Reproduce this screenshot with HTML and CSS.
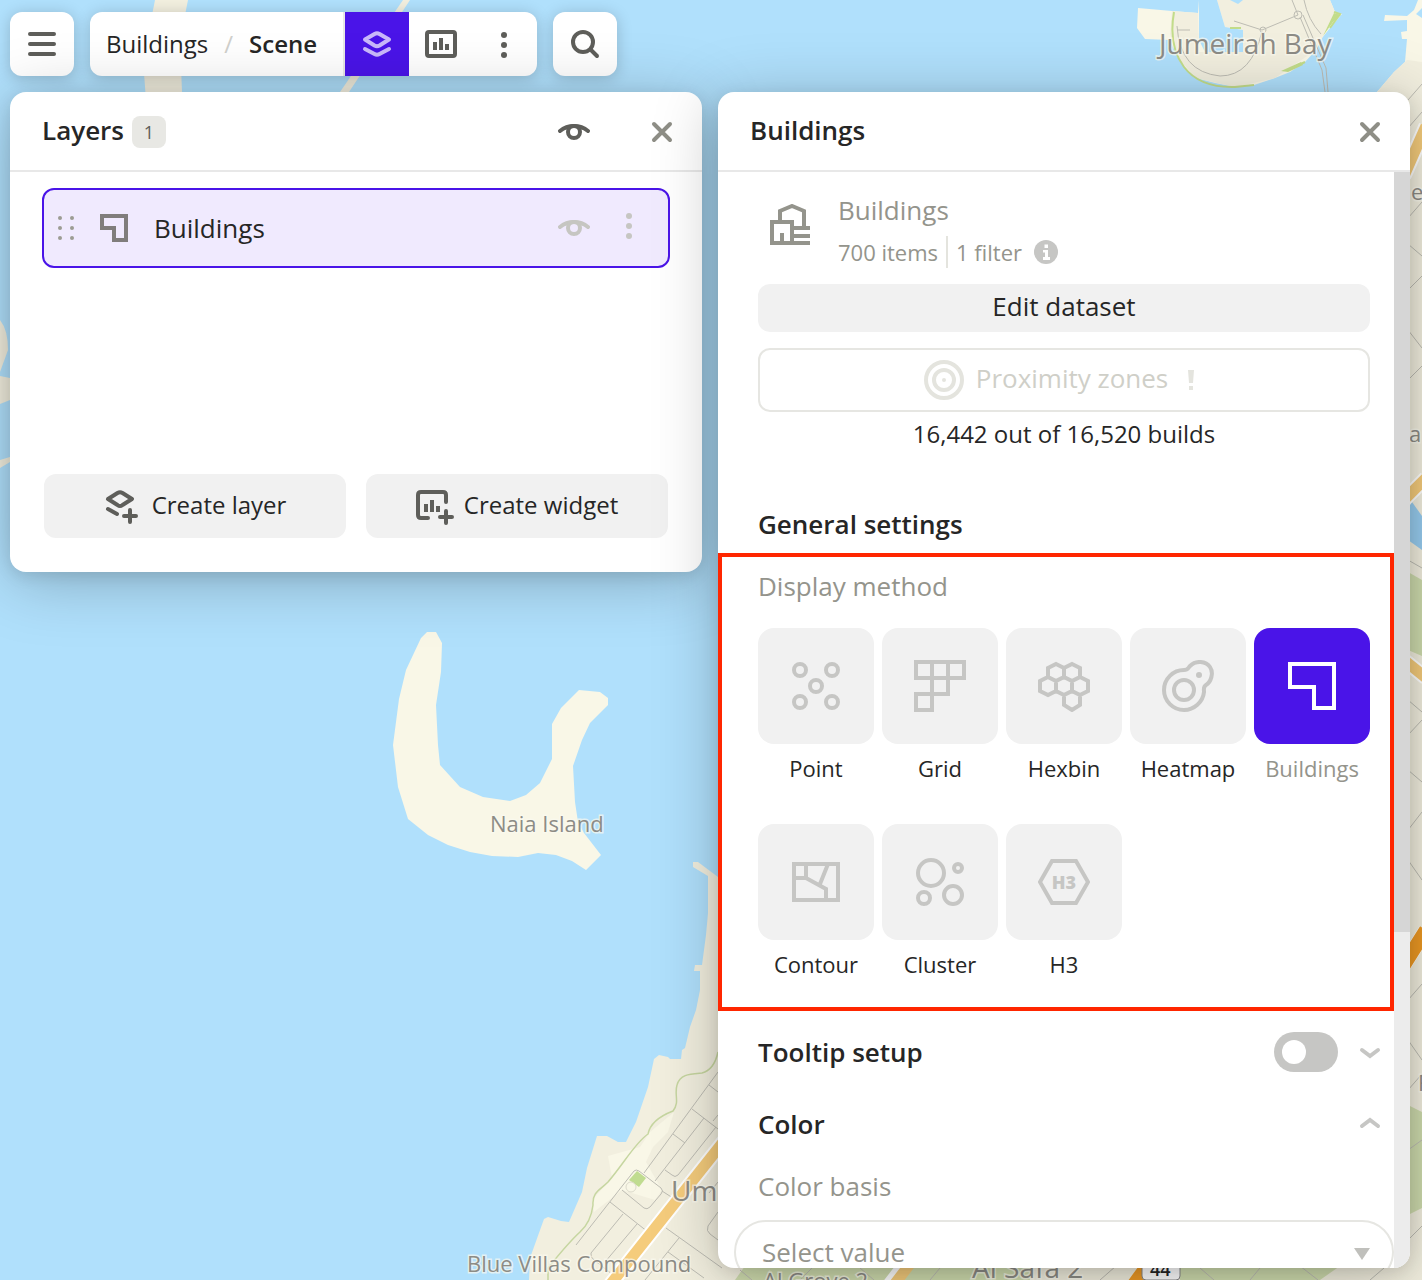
FILE: index.html
```html
<!DOCTYPE html>
<html lang="en">
<head>
<meta charset="utf-8">
<meta name="viewport" content="width=device-width, initial-scale=1">
<title>Buildings / Scene</title>
<link rel="stylesheet" href="styles.css">
</head>
<body>
<svg class="map" viewBox="0 0 1422 1280" preserveAspectRatio="xMinYMin slice" aria-label="Map">
  <rect width="1422" height="1280" fill="#b0e0fc"/>
  <!-- islands -->
  <g fill="#f9f7e7">
    <path d="M427 632L436 632L442 643L441 672L436 705L438 745L440 765L460 787L483 797L510 801L526 795L540 783L552 759V724L561 708L579 690L600 692L608 698V705L590 723L582 740L573 766L575 802L578 822L584 833L601 855L586 870L572 861L556 855L538 853L518 857L492 856L470 852L448 845L428 835L408 819L398 787L393 745L399 699L406 670L421 638Z"/>
    <path d="M1138 8L1172 11L1198 13L1199 0H1330L1335 12L1342 14L1330 28L1322 38L1316 50L1305 62L1290 72L1275 78L1254 85L1235 87L1215 83L1196 78L1185 68L1178 58L1172 45L1170 40L1145 39L1137 28Z"/>
    <path d="M1418 0L1414 10L1407 16L1385 15L1384 21L1407 20V31L1401 32L1402 39H1407L1405 62L1394 72L1370 100H1422V0Z"/>
  </g>
  <g fill="#f2efdf">
    <path d="M155 0H188L180 40L182 92L182 100H146L143 60Z"/>
    <path d="M403 0H410L349 92H340Z"/>
    <path d="M0 320Q8 330 8 350L0 372ZM0 376L10 378V400L0 404ZM0 460L10 457V462L0 468Z"/>
    <path d="M1172 11L1198 13L1199 52H1243V30L1225 27L1217 0H1330L1335 12L1316 50L1275 78L1235 87L1196 78L1178 58L1170 34Z"/>
    <path d="M1394 72L1407 60L1422 62V1280H529L530 1258L544 1219L548 1217L561 1221L569 1222L582 1192L587 1168L597 1136H607L618 1142H626L636 1122L648 1087L654 1059L659 1055L668 1057L670 1059H681L682 1050L685 1048L690 1027L696 1010L700 990V971H694L695 965H702L706 935L708 913V876L693 867V862H698L718 877L1378 91Z"/>
  </g>
  <path d="M1199 0H1217L1225 27L1243 30V52H1205L1199 40ZM1230 0H1243L1238 4ZM1416 14L1422 8V18Z" fill="#b0e0fc"/>
  <path d="M608 1156L640 1147L650 1132L674 1112L668 1132L653 1147L646 1162L662 1190L655 1200L622 1190L594 1212L592 1200L612 1178Z" fill="#f9f7e7"/>
  <!-- parks and canals -->
  <path d="M637 1171L646 1178L639 1187L629 1180Z" fill="#c0dc90"/>
  <circle cx="631" cy="1187" r="5" fill="none" stroke="#dcdacb"/>
  <path d="M1408 572L1422 580V656L1408 650ZM1408 1105L1422 1112V1208L1408 1215ZM745 1266H1030V1280H735ZM1180 1266H1340L1320 1280H1180Z" fill="#cfdcae"/>
  <path d="M1408 508L1412 502L1422 516V550L1408 540Z" fill="#98cdf0"/>
  <path d="M1174 12Q1168 46 1184 67T1235 87L1254 85M1288 70L1305 62M1330 28L1340 14L1334 12M1230 28H1241" fill="none" stroke="#c2dc8a" stroke-width="2"/>
  <path d="M1281 71L1301 62L1303 65L1288 72ZM1334 13L1341 15L1333 22L1323 36Z" fill="#c2dc8a"/>
  <path d="M718 1052Q714 1070 702 1073C690 1074 680 1074 677 1085C674 1095 680 1102 673 1111C660 1116 650 1124 648 1134C635 1143 625 1162 608 1182C600 1190 592 1192 593 1205Q591 1222 580 1232T548 1268V1280" fill="none" stroke="#c6d6a0" stroke-width="1.500"/>
  <!-- streets -->
  <g fill="none" stroke="#bdbcb3" stroke-width="1">
    <path d="M718 1072L644 1173M709 1085L718 1092M692 1109L718 1129M718 1115L713 1121M673 1134L685 1143M704 1118L655 1181M716 1127L678 1175Q675 1178 672 1175L665 1170M576 1245L634 1171Q636 1169 639 1171L661 1188Q664 1191 661 1194L650 1207Q647 1210 644 1208L622 1190M662 1191L676 1200M610 1202L648 1232M623 1214L591 1253Q590 1257 594 1260L612 1274M637 1224L605 1262M666 1228L722 1268M679 1238L645 1280M668 1252L704 1278M718 1212L708 1226Q706 1231 710 1234L718 1240M709 1193L718 1182"/>
    <path d="M1234 21L1262 30L1298 15L1292 0M1262 31Q1252 76 1220 76Q1180 72 1177 26M1177 30H1190M1300 17L1322 70L1325 92M1303 15L1326 68L1328 92M1304 0Q1308 20 1321 34"/>
    <circle cx="1298" cy="15" r="4"/><circle cx="1263" cy="30" r="3"/>
    <path d="M1408 128L1422 112M1408 100L1422 84M1408 218L1422 202M1408 244L1422 256M1408 290L1422 276M1408 330L1422 348M1408 380L1422 366M1408 560L1422 568M1408 700L1422 712M1408 735L1422 720M1408 770L1422 782M1408 830L1422 812M1408 860L1422 880M1408 1000L1422 984M1408 1040L1422 1060M1408 1090L1422 1074M1408 1150L1422 1140M1408 1240L1422 1226M740 1270L752 1280M800 1280L812 1268M860 1268L874 1280M930 1280L940 1268M1100 1280L1116 1266M1200 1268L1214 1280M1250 1280L1260 1268M1300 1266L1318 1280M1370 1280L1384 1268"/>
  </g>
  <g fill="none">
    <path d="M606 1290L728 1136M886 1290L906 1264M1404 176L1426 126M1404 500L1426 478M1404 660L1426 678M1404 965L1426 930" stroke="#fff" stroke-width="15"/>
    <path d="M606 1290L728 1136M890 1290L910 1264M1404 176L1426 126M1404 500L1426 478M1404 660L1426 678" stroke="#f5cc7c" stroke-width="11"/>
    <path d="M1404 965L1426 930M1130 1290L1146 1268" stroke="#ee9a24" stroke-width="14"/>
  </g>
  <!-- place names -->
  <g class="map-labels">
    <text x="1159" y="54" font-size="28">Jumeirah Bay</text>
    <text x="490" y="832" font-size="22">Naia Island</text>
    <text x="467" y="1272" font-size="22">Blue Villas Compound</text>
    <text x="671" y="1201" font-size="28">Um</text>
    <text x="763" y="1289" font-size="22">Al Grove 2</text>
    <text x="972" y="1278" font-size="28">Al Safa 2</text>
    <text x="1411" y="200" font-size="22">e</text>
    <text x="1409" y="442" font-size="22">a</text>
    <text x="1418" y="1091" font-size="22">F</text>
  </g>
  <rect x="1142" y="1256" width="38" height="24" rx="4" fill="#fff" stroke="#888"/>
  <text class="road-number" x="1150" y="1276" font-size="18">44</text>
</svg>

<div class="app">
  <nav class="toolbar">
    <button class="card icon-card" aria-label="Menu">
      <svg width="32" height="32" fill="none" stroke="#5e5e5a" stroke-width="4" stroke-linecap="round"><path d="M4 6H28M4 16H28M4 26H28"/></svg>
    </button>
    <div class="card scene-bar">
      <div class="crumbs">
        <a href="#">Buildings</a><span class="slash">/</span><a class="current" href="#">Scene</a>
      </div>
      <button class="tool tool-active" aria-label="Layers">
        <svg width="32" height="32" fill="none" stroke="#c9b8fa" stroke-width="4" stroke-linecap="round" stroke-linejoin="round"><path d="M4 11.500L13.500 6Q16 4.500 18.500 6L28 11.500L18.500 17.500Q16 19 13.500 17.500ZM4 21L13.500 26Q16 27.500 18.500 26L28 21"/></svg>
      </button>
      <button class="tool" aria-label="Charts">
        <svg width="32" height="32" fill="none" stroke="#5e5e5a" stroke-width="4"><rect x="2" y="4" width="28" height="24" rx="2"/><path d="M10 14V22M16 10V22M22 16V22"/></svg>
      </button>
      <button class="tool" aria-label="More">
        <svg width="32" height="32" fill="#5e5e5a"><circle cx="15" cy="7" r="3"/><circle cx="15" cy="17" r="3"/><circle cx="15" cy="27" r="3"/></svg>
      </button>
    </div>
    <button class="card icon-card" aria-label="Search">
      <svg width="32" height="32" fill="none" stroke="#5e5e5a" stroke-width="4" stroke-linecap="round"><circle cx="14" cy="14" r="10"/><path d="M22 22L28 28"/></svg>
    </button>
  </nav>

  <div class="panels">
    <section class="panel layers">
      <header class="panel-head">
        <h2>Layers</h2><span class="count">1</span>
        <button class="plain eye" aria-label="Toggle all layers">
          <svg width="32" height="20" fill="none" stroke="#5e5e5a" stroke-width="4" stroke-linecap="round"><path d="M2 9Q8 4 16 4T30 9"/><circle cx="16" cy="10" r="6"/></svg>
        </button>
        <button class="plain" aria-label="Close layers">
          <svg width="24" height="24" fill="none" stroke="#8e8e86" stroke-width="4" stroke-linecap="round"><path d="M4 4L20 20M20 4L4 20"/></svg>
        </button>
      </header>
      <div class="layer-list">
        <div class="layer">
          <svg width="20" height="28" fill="#9c9c94"><circle cx="4" cy="4" r="2"/><circle cx="16" cy="4" r="2"/><circle cx="4" cy="14" r="2"/><circle cx="16" cy="14" r="2"/><circle cx="4" cy="24" r="2"/><circle cx="16" cy="24" r="2"/></svg>
          <svg class="layer-shape" width="28" height="28" fill="none" stroke="#807d7c" stroke-width="4"><path d="M2 2H26V26H14V14H2Z"/></svg>
          <span class="layer-name">Buildings</span>
          <button class="plain eye" aria-label="Toggle Buildings">
            <svg width="32" height="20" fill="none" stroke="#c6c6c2" stroke-width="4" stroke-linecap="round"><path d="M2 9Q8 4 16 4T30 9"/><circle cx="16" cy="10" r="6"/></svg>
          </button>
          <button class="plain" aria-label="Buildings options">
            <svg width="8" height="32" fill="#c6c6c2"><circle cx="3" cy="4" r="3"/><circle cx="3" cy="14" r="3"/><circle cx="3" cy="24" r="3"/></svg>
          </button>
        </div>
      </div>
      <footer class="layer-actions">
        <button class="soft">
          <svg width="36" height="36" fill="none" stroke="#5e5e5a" stroke-width="4" stroke-linecap="round" stroke-linejoin="round"><path d="M4 11L13.500 5Q16 3.500 18.500 5L28 11L18.500 17Q16 19 13.500 17ZM4 21L13 26M26 22V34M20 28H32"/></svg>
          <span class="label">Create layer</span>
        </button>
        <button class="soft">
          <svg class="spill" width="36" height="36" viewBox="2 0 36 36" fill="none" stroke="#5e5e5a" stroke-width="4" stroke-linecap="round"><path d="M32 14V7Q32 4 29 4H7Q4 4 4 7V27Q4 30 7 30H14M32 23V35M26 29H38"/><path d="M12 16V24M18 12V24M24 18V24" stroke-linecap="butt"/></svg>
          <span class="label">Create widget</span>
        </button>
      </footer>
    </section>

    <section class="panel details">
      <header class="panel-head">
        <h2>Buildings</h2>
        <button class="plain close" aria-label="Close Buildings">
          <svg width="24" height="24" fill="none" stroke="#8e8e86" stroke-width="4" stroke-linecap="round"><path d="M4 4L20 20M20 4L4 20"/></svg>
        </button>
      </header>
      <div class="details-body">
        <div class="details-content">
          <div class="block">
            <div class="dataset">
              <svg class="dataset-icon" width="40" height="44" fill="none" stroke="#94948c" stroke-width="4"><path d="M10 16V7L22 2L34 7V23M2 39V18H22V24H40M22 24V39M0 39H40M22 32H40M12 29V39"/></svg>
              <div>
                <div class="dataset-name">Buildings</div>
                <div class="dataset-meta"><span>700 items</span><span class="filter">1 filter</span>
                  <svg width="24" height="24"><circle cx="12" cy="12" r="12" fill="#c6c6c4"/><path d="M10.500 4.500H14V8H10.500ZM9 10H14V17H16V20H9V17H11V12.500H9Z" fill="#fff"/></svg>
                </div>
              </div>
            </div>
            <button class="soft edit"><span class="label">Edit dataset</span></button>
            <button class="zones" disabled>
              <svg width="40" height="40" fill="none" stroke="#e4e4de" stroke-width="4"><circle cx="20" cy="20" r="18"/><circle cx="20" cy="20" r="10"/><circle cx="20" cy="20" r="2" fill="#e4e4de" stroke="none"/></svg>
              <span class="label">Proximity zones</span>
              <svg class="bang" width="6" height="22" fill="#e4e4de"><path d="M0 1H6L5 14H1ZM1 17H5V21H1Z"/></svg>
            </button>
            <p class="summary">16,442 out of 16,520 builds</p>
            <h3 class="general">General settings</h3>
          </div>

          <div class="methods">
            <h4>Display method</h4>
            <div class="method-grid">
              <button class="method"><span class="tile"><svg width="52" height="52"><circle cx="10" cy="10" r="6"/><circle cx="42" cy="10" r="6"/><circle cx="26" cy="26" r="6"/><circle cx="10" cy="42" r="6"/><circle cx="42" cy="42" r="6"/></svg></span>Point</button>
              <button class="method"><span class="tile"><svg width="52" height="52"><path d="M2 2H50V18H2ZM18 2V34H34V2M2 34H18V50H2Z"/></svg></span>Grid</button>
              <button class="method"><span class="tile"><svg width="52" height="52"><path d="M18 4L26 8V17L18 21L10 17V8ZM34 4L42 8V17L34 21L26 17V8ZM10 17L18 21V31L10 35L2 31V21ZM26 17L34 21V31L26 35L18 31V21ZM42 17L50 21V31L42 35L34 31V21ZM34 31L42 35V45L34 50L26 45V35Z"/></svg></span>Hexbin</button>
              <button class="method"><span class="tile"><svg width="52" height="52"><path d="M22 10C26 10 26 8 28 6C34 0 44 1 48 7C52 13 49 22 44 25C41 27 42 29 42 32C41 42 32 50 22 50C11 50 2 41 2 30C2 19 11 10 22 10Z"/><circle cx="22" cy="30" r="10"/><circle class="dot" cx="37" cy="15" r="3"/></svg></span>Heatmap</button>
              <button class="method selected" aria-pressed="true"><span class="tile"><svg width="52" height="52"><path d="M4 4H48V48H28V27H4Z"/></svg></span>Buildings</button>
              <button class="method"><span class="tile"><svg width="52" height="52"><path d="M4 8H48V44H4ZM4 22H16V8M16 22L36 33V44M38 8L30 28"/></svg></span>Contour</button>
              <button class="method"><span class="tile"><svg width="52" height="52"><circle cx="17" cy="17" r="13"/><circle cx="44" cy="12" r="4"/><circle cx="10" cy="42" r="6"/><circle cx="39" cy="39" r="9"/></svg></span>Cluster</button>
              <button class="method"><span class="tile"><svg width="52" height="52"><path d="M14 5H38L50 26L38 47H14L2 26Z"/><text x="26" y="33" text-anchor="middle">H3</text></svg></span>H3</button>
            </div>
          </div>

          <div class="block lower">
            <div class="row">
              <h3><label for="tooltip">Tooltip setup</label></h3>
              <input class="switch" id="tooltip" type="checkbox">
              <button class="plain chevron" aria-label="Expand tooltip setup"><svg width="24" height="16" fill="none" stroke="#c6c6c4" stroke-width="4" stroke-linecap="round"><path d="M4 6L12 12L20 6"/></svg></button>
            </div>
            <div class="row">
              <h3>Color</h3>
              <button class="plain chevron" aria-label="Collapse color"><svg width="24" height="16" fill="none" stroke="#c6c6c4" stroke-width="4" stroke-linecap="round"><path d="M4 10L12 4L20 10"/></svg></button>
            </div>
            <label class="basis" for="basis">Color basis</label>
          </div>
          <div class="select-wrap">
            <select id="basis"><option>Select value</option></select>
            <svg class="arrow" width="16" height="12" fill="#c0c0bc"><path d="M0 0H16L8 12Z"/></svg>
          </div>
        </div>
        <div class="scrollbar"><div class="thumb"></div></div>
      </div>
    </section>
  </div>
</div>
</body>
</html>
```
FILE: styles.css
```css
* { box-sizing: border-box; }

body {
  margin: 0;
  height: 100vh;
  overflow: hidden;
  font-family: "Open Sans", "Noto Sans", sans-serif;
  font-size: 24px;
  color: #262626;
}

h2, h3, h4, p { margin: 0; }
h2, h3 { font-size: 26px; font-weight: 600; }
svg { display: block; flex: none; }

button {
  font: inherit;
  color: inherit;
  border: 0;
  padding: 0;
  background: none;
  display: flex;
  align-items: center;
  justify-content: center;
}

.label { padding-bottom: 4px; }
.spill { overflow: visible; }

.map {
  position: absolute;
  inset: 0;
  width: 100%;
  height: 100%;
}

.map-labels {
  fill: #8d8c86;
  stroke: #fbfaf0;
  stroke-width: 3px;
  stroke-opacity: 0.7;
  paint-order: stroke;
}

.road-number { font-weight: 600; fill: #262626; }

.app {
  position: relative;
  height: 100vh;
  padding: 12px 12px 12px 10px;
  display: flex;
  flex-direction: column;
  gap: 16px;
}

/* Toolbar */
.toolbar { display: flex; gap: 16px; height: 64px; flex: none; }

.card {
  background: #fff;
  border-radius: 12px;
  box-shadow: 0 2px 16px rgba(0, 0, 0, 0.2);
}

.icon-card { width: 64px; }
.scene-bar { display: flex; overflow: hidden; }

.crumbs {
  display: flex;
  align-items: center;
  padding: 0 26px 2px 16px;
  border-right: 2px solid #e8e8e6;
}

.crumbs a { color: inherit; text-decoration: none; }
.crumbs .current { font-weight: 600; }
.slash { color: #d0d0cc; padding: 0 16px; }
.tool { width: 64px; }
.tool-active { background: #4a14e8; }

/* Panels */
.panels {
  display: flex;
  align-items: flex-start;
  gap: 16px;
  flex: 1;
  min-height: 0;
}

.panel {
  flex: 1;
  min-width: 0;
  background: #fff;
  border-radius: 16px;
  box-shadow: 0 4px 16px rgba(0, 0, 0, 0.1), 0 8px 64px rgba(0, 0, 0, 0.25);
}

.panel-head {
  display: flex;
  align-items: center;
  height: 80px;
  flex: none;
  padding: 2px 20px 0 32px;
  border-bottom: 2px solid #e8e8e8;
}

.panel-head h2 { padding-bottom: 4px; }
.plain { width: 40px; height: 40px; }
.eye { margin-left: auto; }
.panel-head .eye { margin-right: 48px; }
.close { margin-left: auto; }

.count {
  margin-left: 8px;
  width: 34px;
  line-height: 32px;
  text-align: center;
  font-size: 18px;
  color: #5e5e5a;
  background: #e8e8e4;
  border-radius: 8px;
}

.layer-list { padding: 16px 32px; min-height: 302px; }

.layer {
  display: flex;
  align-items: center;
  height: 80px;
  padding: 0 18px 0 12px;
  border: 2px solid #4a14e8;
  border-radius: 12px;
  background: #f0eafe;
}

.layer-shape { margin-left: 24px; }
.layer-name { margin-left: 26px; font-size: 26px; }
.layer .eye { margin-right: 16px; }

.layer-actions {
  display: flex;
  gap: 20px;
  padding: 0 34px 34px;
}

.soft {
  flex: 1;
  height: 64px;
  gap: 12px;
  background: #f1f1f1;
  border-radius: 12px;
}

/* Details panel */
.details {
  align-self: stretch;
  display: flex;
  flex-direction: column;
  overflow: hidden;
}

.details-body { display: flex; flex: 1; min-height: 0; }
.details-content { flex: 1; min-width: 0; overflow: hidden; }
.scrollbar { width: 16px; background: #ececec; }
.thumb { height: calc(100% - 336px); background: #d6d6d6; }
.block { padding: 0 24px 0 40px; }

.dataset {
  display: flex;
  align-items: flex-start;
  gap: 28px;
  height: 112px;
  padding: 18px 0 0 12px;
  color: #94948c;
}

.dataset-icon { margin-top: 14px; }
.dataset-name { font-size: 26px; line-height: 40px; }

.dataset-meta {
  display: flex;
  align-items: center;
  font-size: 22px;
  line-height: 32px;
  padding-top: 6px;
}

.filter {
  margin: 0 12px 0 8px;
  padding-left: 8px;
  border-left: 2px solid #e4e4de;
}

.edit { width: 100%; height: 48px; font-size: 26px; }

.zones {
  width: 100%;
  height: 64px;
  margin-top: 16px;
  gap: 12px;
  font-size: 26px;
  color: #cfcfc8;
  border: 2px solid #e6e6e2;
  border-radius: 12px;
}

.bang { margin: 0 10px 0 8px; }
.summary { text-align: center; line-height: 40px; padding-top: 2px; }
.general { line-height: 40px; padding: 50px 0 9px; }

.methods {
  border: 4px solid #ff2600;
  padding: 9px 20px 15px 36px;
}

h4 { font-size: 26px; font-weight: 400; line-height: 40px; color: #94948c; }

.method-grid {
  display: grid;
  grid-template-columns: repeat(5, 1fr);
  gap: 28px 8px;
  padding-top: 22px;
}

.method {
  flex-direction: column;
  justify-content: flex-start;
  gap: 6px;
  height: 168px;
  font-size: 22px;
  line-height: 36px;
}

.tile {
  display: flex;
  align-items: center;
  justify-content: center;
  width: 100%;
  height: 116px;
  border-radius: 16px;
  background: #f1f1f1;
}

.tile svg { fill: none; stroke: #c6c6c4; stroke-width: 4px; }
.tile .dot, .tile text { fill: #c6c6c4; stroke: none; }
.tile text { font-size: 18px; font-weight: 800; }
.selected { color: #94948c; }
.selected .tile { background: #4a14e8; }
.selected .tile svg { stroke: #fff; }

.lower { padding-top: 5px; padding-right: 4px; }
.row { display: flex; align-items: center; height: 72px; }
.row h3 { margin-right: auto; }

.switch {
  appearance: none;
  margin: 0 12px 0 0;
  width: 64px;
  height: 40px;
  padding: 8px;
  border-radius: 20px;
  background: #c6c6c4;
}

.switch::before {
  content: "";
  display: block;
  width: 24px;
  height: 24px;
  border-radius: 50%;
  background: #fff;
}

.basis { display: block; font-size: 26px; line-height: 40px; padding: 6px 0 14px; color: #94948c; }

.select-wrap { position: relative; padding-left: 16px; }

select {
  appearance: none;
  width: 100%;
  height: 64px;
  padding: 0 26px;
  font: inherit;
  font-size: 26px;
  color: #94948c;
  background: #fff;
  border: 2px solid #e6e6e2;
  border-radius: 32px;
}

.arrow { position: absolute; right: 24px; top: 28px; }
```
